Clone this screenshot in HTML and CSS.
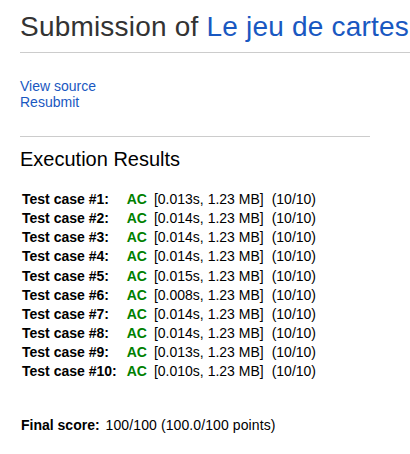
FILE: index.html
```html
<!DOCTYPE html>
<html>
<head>
<meta charset="utf-8">
<link rel="stylesheet" href="styles.css">
</head>
<body>
<div class="page">
  <h2 class="title">Submission of <a href="#">Le jeu de cartes</a></h2>
  <div class="links">
    <div><a href="#">View source</a></div>
    <div><a href="#">Resubmit</a></div>
  </div>
  <hr class="sep">
  <h3 class="results-title">Execution Results</h3>
  <table class="cases">
    <tr><td class="case">Test case #1:</td><td class="ac">AC</td><td class="time">[0.013s, 1.23 MB]</td><td class="pts">(10/10)</td></tr>
    <tr><td class="case">Test case #2:</td><td class="ac">AC</td><td class="time">[0.014s, 1.23 MB]</td><td class="pts">(10/10)</td></tr>
    <tr><td class="case">Test case #3:</td><td class="ac">AC</td><td class="time">[0.014s, 1.23 MB]</td><td class="pts">(10/10)</td></tr>
    <tr><td class="case">Test case #4:</td><td class="ac">AC</td><td class="time">[0.014s, 1.23 MB]</td><td class="pts">(10/10)</td></tr>
    <tr><td class="case">Test case #5:</td><td class="ac">AC</td><td class="time">[0.015s, 1.23 MB]</td><td class="pts">(10/10)</td></tr>
    <tr><td class="case">Test case #6:</td><td class="ac">AC</td><td class="time">[0.008s, 1.23 MB]</td><td class="pts">(10/10)</td></tr>
    <tr><td class="case">Test case #7:</td><td class="ac">AC</td><td class="time">[0.014s, 1.23 MB]</td><td class="pts">(10/10)</td></tr>
    <tr><td class="case">Test case #8:</td><td class="ac">AC</td><td class="time">[0.014s, 1.23 MB]</td><td class="pts">(10/10)</td></tr>
    <tr><td class="case">Test case #9:</td><td class="ac">AC</td><td class="time">[0.013s, 1.23 MB]</td><td class="pts">(10/10)</td></tr>
    <tr><td class="case">Test case #10:</td><td class="ac">AC</td><td class="time">[0.010s, 1.23 MB]</td><td class="pts">(10/10)</td></tr>
  </table>
  <div class="final"><b>Final score:</b><span class="score">100/100 (100.0/100 points)</span></div>
</div>
</body>
</html>
```
FILE: styles.css
```css
html, body {
  margin: 0;
  padding: 0;
  background: #fff;
}
body {
  font-family: "Liberation Sans", Arial, sans-serif;
  font-size: 14px;
  color: #000;
}
a {
  color: #1958c1;
  text-decoration: none;
}
.page {
  padding-left: 20px;
}
.title {
  margin: 0;
  padding: 10px 0 8px;
  font-size: 28px;
  line-height: 34px;
  font-weight: normal;
  letter-spacing: 0.2px;
  color: #333;
  border-bottom: 1px solid #ccc;
  white-space: nowrap;
  overflow: hidden;
}
.links {
  margin-top: 25px;
  line-height: 16px;
}
.sep {
  width: 350px;
  height: 0;
  margin: 26px 0 0;
  border: 0;
  border-top: 1px solid #ccc;
}
.results-title {
  margin: 10px 0 0;
  font-size: 20px;
  line-height: 24px;
  font-weight: normal;
}
.cases {
  margin-top: 19px;
  border-collapse: collapse;
  border-spacing: 0;
}
.cases td {
  padding: 0;
  line-height: 19.15px;
  white-space: nowrap;
}
.cases .case {
  font-weight: bold;
  padding: 0 10px 0 2px;
}
.cases .ac {
  color: #008000;
  font-weight: bold;
  padding-right: 7px;
}
.cases .time {
  padding-right: 8px;
}
.final {
  margin-top: 35px;
  margin-left: 1px;
  line-height: 16px;
}
.final .score {
  margin-left: 6px;
  letter-spacing: 0.1px;
}
```
